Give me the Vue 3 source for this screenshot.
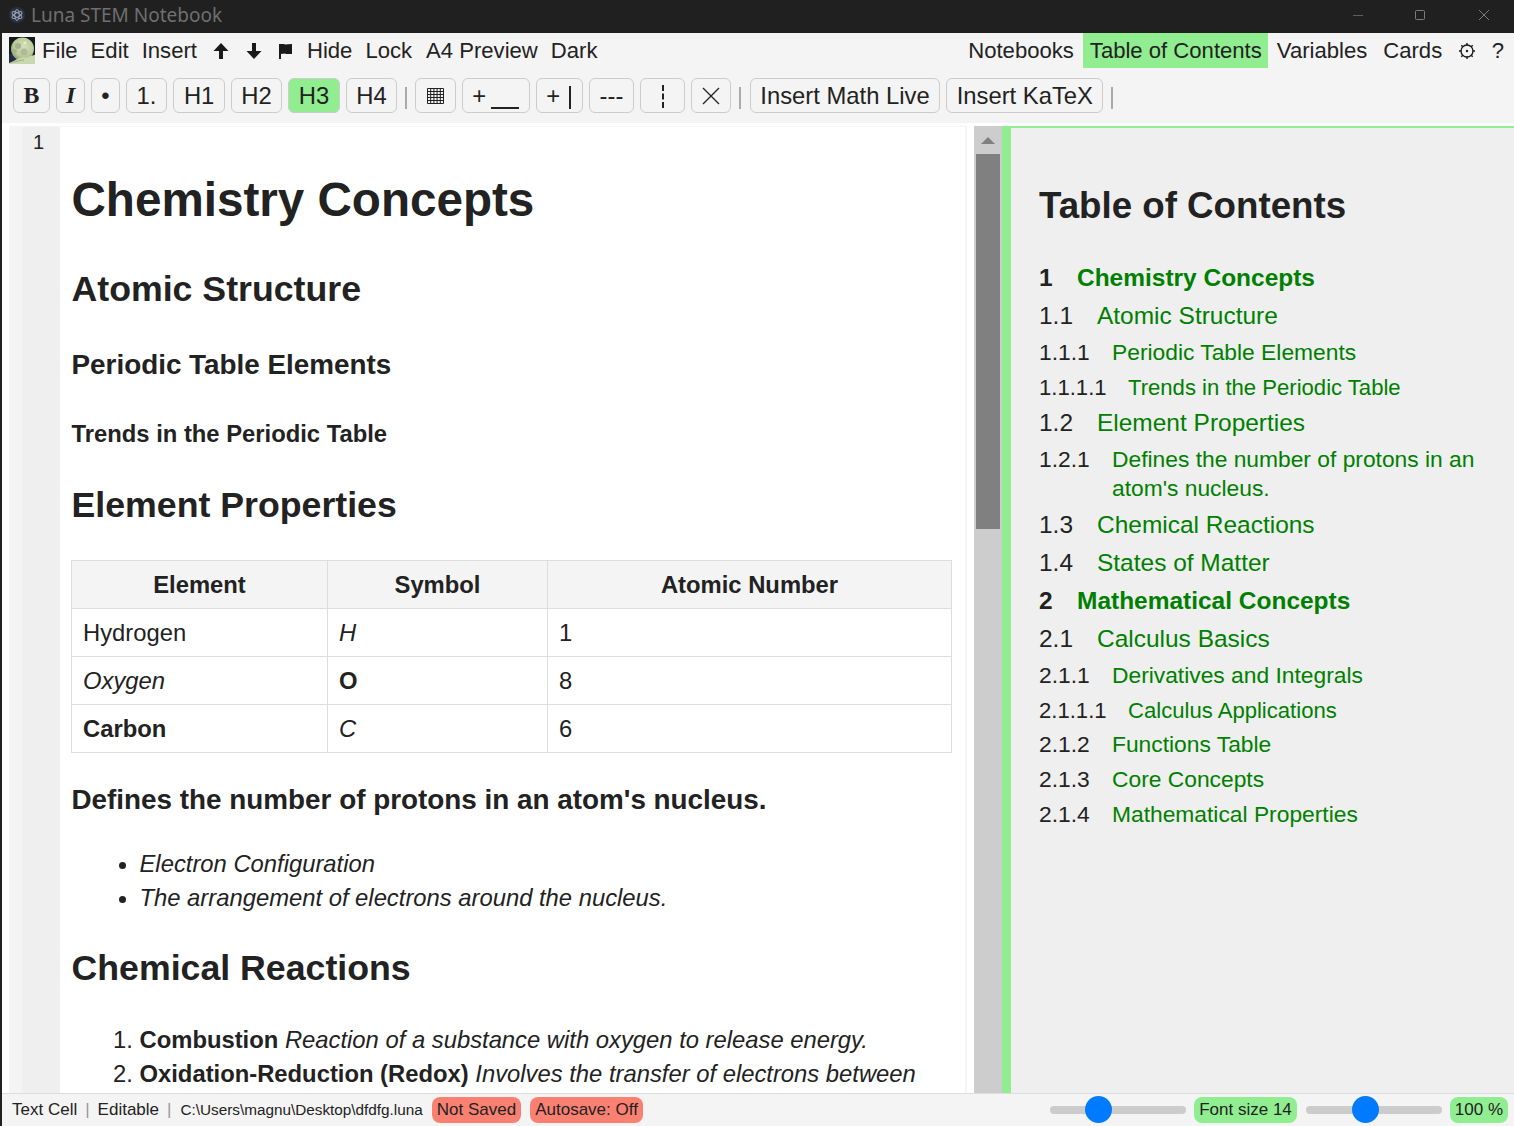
<script setup>
const toc = [
  { l: 1, n: '1', t: 'Chemistry Concepts' },
  { l: 2, n: '1.1', t: 'Atomic Structure' },
  { l: 3, n: '1.1.1', t: 'Periodic Table Elements' },
  { l: 4, n: '1.1.1.1', t: 'Trends in the Periodic Table' },
  { l: 2, n: '1.2', t: 'Element Properties' },
  { l: 3, n: '1.2.1', t: "Defines the number of protons in an atom's nucleus." },
  { l: 2, n: '1.3', t: 'Chemical Reactions' },
  { l: 2, n: '1.4', t: 'States of Matter' },
  { l: 1, n: '2', t: 'Mathematical Concepts' },
  { l: 2, n: '2.1', t: 'Calculus Basics' },
  { l: 3, n: '2.1.1', t: 'Derivatives and Integrals' },
  { l: 4, n: '2.1.1.1', t: 'Calculus Applications' },
  { l: 3, n: '2.1.2', t: 'Functions Table' },
  { l: 3, n: '2.1.3', t: 'Core Concepts' },
  { l: 3, n: '2.1.4', t: 'Mathematical Properties' }
]
</script>

<template>
  <div class="app">
    <header class="titlebar">
      <svg class="app-icon" width="16" height="16" viewBox="0 0 16 16">
        <circle cx="8" cy="8" r="8" fill="#2a3140" />
        <g fill="none" stroke="#9aa5b5" stroke-width="1">
          <ellipse cx="8" cy="8" rx="5.500" ry="2.200" transform="rotate(30 8 8)" />
          <ellipse cx="8" cy="8" rx="5.500" ry="2.200" transform="rotate(90 8 8)" />
          <ellipse cx="8" cy="8" rx="5.500" ry="2.200" transform="rotate(150 8 8)" />
        </g>
      </svg>
      <span class="title">Luna STEM Notebook</span>
      <div class="winctl">
        <svg class="w-min" width="10" height="10" viewBox="0 0 10 10"><path d="M0 5.500h10" stroke="#5f5f5f" /></svg>
        <svg class="w-max" width="10" height="10" viewBox="0 0 10 10"><rect x=".5" y=".5" width="9" height="9" rx="1" fill="none" stroke="#7d7d7d" /></svg>
        <svg class="w-cls" width="10" height="10" viewBox="0 0 10 10"><path d="M0 0l10 10M10 0L0 10" stroke="#7d7d7d" /></svg>
      </div>
    </header>

    <div class="shell">
      <nav class="menu">
        <div class="menu-left">
          <svg class="logo" width="26" height="27" viewBox="0 0 26 27">
            <defs>
              <radialGradient id="moon" cx="55%" cy="40%" r="60%">
                <stop offset="0" stop-color="#d4dfb8" />
                <stop offset=".7" stop-color="#bccb9a" />
                <stop offset="1" stop-color="#8f9f78" />
              </radialGradient>
            </defs>
            <rect width="26" height="27" fill="#15191c" />
            <rect y="17" width="26" height="10" fill="#1f2c44" />
            <circle cx="13.500" cy="12" r="11.500" fill="url(#moon)" />
            <circle cx="9" cy="9" r="3" fill="#a3b18d" />
            <circle cx="15" cy="15" r="3.500" fill="#adbb98" />
            <circle cx="6" cy="14" r="2" fill="#a3b18d" />
            <circle cx="16" cy="6" r="1.600" fill="#e4eacd" />
            <path d="M0 26c4-1 7-4 11-5 3-1 6 0 8-1 2-1 5-2 7-2v9H0z" fill="#c9d8ae" />
            <path d="M3 25c4 0 8-2 12-2" stroke="#9fae88" fill="none" />
          </svg>
          <span class="mi">File</span>
          <span class="mi">Edit</span>
          <span class="mi">Insert</span>
          <svg class="mico first" width="16" height="16" viewBox="0 0 16 16"><path d="M8 0l7.500 8H10v8H6V8H.5z" fill="#1a1a1a" /></svg>
          <svg class="mico" width="16" height="16" viewBox="0 0 16 16"><path d="M8 16L.5 8H6V0h4v8h5.500z" fill="#1a1a1a" /></svg>
          <svg class="mico flag" width="13" height="16" viewBox="0 0 13 16"><path d="M0 1h5l1 .5 7-.5v10H7l-1-.5-4 .5v5H0z" fill="#1a1a1a" /></svg>
          <span class="mi">Hide</span>
          <span class="mi lock">Lock</span>
          <span class="mi">A4 Preview</span>
          <span class="mi">Dark</span>
        </div>
        <div class="menu-right">
          <span class="ri">Notebooks</span>
          <span class="ri active">Table of Contents</span>
          <span class="ri">Variables</span>
          <span class="ri">Cards</span>
          <svg class="gear" width="16" height="16" viewBox="0 0 16 16">
            <circle cx="8" cy="8" r="6" fill="none" stroke="#1a1a1a" stroke-width="1.300" />
            <circle cx="8" cy="8" r="1.200" fill="#1a1a1a" />
            <path d="M8 0v2.500M8 13.500V16M0 8h2.500M13.500 8H16M2.300 2.300l1.500 1.500M13.700 2.300l-1.500 1.500M2.300 13.700l1.500-1.500M13.700 13.700l-1.500-1.500" stroke="#1a1a1a" stroke-width="1.400" />
          </svg>
          <span class="ri q">?</span>
        </div>
      </nav>

      <div class="toolbar">
        <button class="tb serif"><b>B</b></button>
        <button class="tb serif ital"><b><i>I</i></b></button>
        <button class="tb bullet">•</button>
        <button class="tb wide">1.</button>
        <button class="tb">H1</button>
        <button class="tb">H2</button>
        <button class="tb on">H3</button>
        <button class="tb">H4</button>
        <span class="sep first"></span>
        <button class="tb grid">
          <svg width="17" height="16" viewBox="0 0 17 16"><path d="M.5.500h16v15H.5zM.5 3.500h16M.5 6.500h16M.5 9.500h16M.5 12.500h16M3.700.5v15M6.900.5v15M10.100.5v15M13.300.5v15" fill="none" stroke="#222" /></svg>
        </button>
        <button class="tb">+<span class="bar"></span></button>
        <button class="tb">+<span class="vbar"></span></button>
        <button class="tb wide">---</button>
        <button class="tb dash">
          <svg width="4" height="23" viewBox="0 0 4 23"><path d="M2 0v6M2 8.500v6M2 17v6" stroke="#222" stroke-width="2" /></svg>
        </button>
        <button class="tb cross">
          <svg width="18" height="18" viewBox="0 0 18 18"><path d="M1 1l16 16M17 1L1 17" stroke="#222" stroke-width="1.300" /></svg>
        </button>
        <span class="sep"></span>
        <button class="tb">Insert Math Live</button>
        <button class="tb">Insert KaTeX</button>
        <span class="sep"></span>
      </div>

      <main class="main">
        <section class="left">
          <div class="cell">
            <div class="gutter">1</div>
            <article class="doc">
              <h1>Chemistry Concepts</h1>
              <h2>Atomic Structure</h2>
              <h3>Periodic Table Elements</h3>
              <h4>Trends in the Periodic Table</h4>
              <h2 class="h2b">Element Properties</h2>
              <table>
                <colgroup><col class="c1" /><col class="c2" /><col /></colgroup>
                <thead>
                  <tr><th>Element</th><th>Symbol</th><th>Atomic Number</th></tr>
                </thead>
                <tbody>
                  <tr><td>Hydrogen</td><td><i>H</i></td><td>1</td></tr>
                  <tr><td><i>Oxygen</i></td><td><b>O</b></td><td>8</td></tr>
                  <tr><td><b>Carbon</b></td><td><i>C</i></td><td>6</td></tr>
                </tbody>
              </table>
              <h3 class="h3b">Defines the number of protons in an atom's nucleus.</h3>
              <ul>
                <li><i>Electron Configuration</i></li>
                <li><i>The arrangement of electrons around the nucleus.</i></li>
              </ul>
              <h2 class="h2c">Chemical Reactions</h2>
              <ol>
                <li><b>Combustion</b> <i>Reaction of a substance with oxygen to release energy.</i></li>
                <li><b>Oxidation-Reduction (Redox)</b> <i>Involves the transfer of electrons between</i></li>
              </ol>
            </article>
          </div>
          <div class="scroll">
            <span class="arrow"></span>
            <span class="thumb"></span>
          </div>
        </section>
        <aside class="tocpane">
          <h2 class="toc-title">Table of Contents</h2>
          <div v-for="r in toc" :key="r.n" class="row" :class="'l' + r.l">
            <span class="num">{{ r.n }}</span>
            <span class="txt">{{ r.t }}</span>
          </div>
        </aside>
      </main>

      <footer class="status">
        <span>Text Cell</span><span class="pipe">|</span>
        <span>Editable</span><span class="pipe">|</span>
        <span class="path">C:\Users\magnu\Desktop\dfdfg.luna</span>
        <span class="pill red">Not Saved</span>
        <span class="pill red">Autosave: Off</span>
        <span class="spacer"></span>
        <span class="slider"><span class="knob"></span></span>
        <span class="pill green">Font size 14</span>
        <span class="slider s2"><span class="knob"></span></span>
        <span class="pill green">100 %</span>
      </footer>
    </div>
  </div>
</template>

<style>
html, body { margin: 0; padding: 0; background: #202020; }
</style>

<style scoped>
.app {
  width: 1514px;
  height: 1126px;
  overflow: hidden;
  display: flex;
  flex-direction: column;
  font-family: "Liberation Sans", Arial, sans-serif;
  color: #222;
  background: #202020;
}
.titlebar {
  height: 33px;
  flex: none;
  display: flex;
  align-items: center;
  padding-left: 9px;
  padding-bottom: 4px;
  box-sizing: border-box;
}
.app-icon { margin-right: 6px; }
.title { font-family: "Noto Sans", sans-serif; font-size: 19px; color: #6f6f6f; }
.winctl { margin-left: auto; display: flex; padding-right: 25px; }
.w-max { margin-left: 52px; }
.w-cls { margin-left: 54px; }
.shell {
  flex: 1;
  min-height: 0;
  margin-left: 2px;
  display: flex;
  flex-direction: column;
  background: #f4f4f4;
}
.menu {
  height: 35px;
  flex: none;
  display: flex;
  justify-content: space-between;
  font-size: 22.100px;
}
.menu-left, .menu-right { display: flex; align-items: center; height: 35px; }
.logo { margin: 0 7px 0 7px; }
.mi { margin-right: 13px; }
.mi.lock { margin-right: 14px; }
.mico { margin-right: 17px; }
.mico.first { margin-left: 3px; }
.mico.flag { margin-right: 15px; }
.menu-right { padding-right: 10px; }
.ri { padding: 0 6.500px; margin-right: 3px; height: 35px; line-height: 35px; }
.ri.active { background: #90ee90; margin-right: 2px; }
.gear { margin: 0 17px 0 7px; }
.ri.q { margin: 0; padding: 0; }
.toolbar {
  height: 55px;
  flex: none;
  display: flex;
  align-items: flex-start;
  gap: 6px;
  padding: 10px 0 0 11px;
  box-sizing: border-box;
}
.tb {
  height: 35px;
  box-sizing: border-box;
  border: 1px solid #ccc;
  border-radius: 6px;
  background: #f4f4f4;
  font: 23.800px "Liberation Sans", Arial, sans-serif;
  color: #222;
  padding: 0 9.520px;
  display: flex;
  align-items: center;
  justify-content: center;
}
.tb.serif { font-family: "Liberation Serif", serif; }
.tb.ital, .tb.bullet { padding: 0 9px; }
.tb.wide { padding: 0 10px; }
.tb.on { background: #90ee90; }
.tb.grid { padding: 0 11px; }
.tb.dash { padding: 0 19px 0 20px; }
.tb.dash svg { margin-top: 2px; }
.tb.cross { padding: 0 10px; }
.bar { width: 28px; height: 2px; background: #222; margin: 24px 0 0 5px; }
.vbar { width: 2px; height: 23px; background: #222; margin: 4px 1px 0 9px; }
.sep { width: 2.500px; height: 22px; background: #aaa; margin: 9px 2.500px 0 1.500px; }
.sep.first { margin-right: 1.500px; }
.main {
  flex: 1;
  min-height: 0;
  display: flex;
  border-top: 3px solid #fff;
}
.left {
  width: 1000px;
  flex: none;
  display: flex;
  padding-left: 7px;
  box-sizing: border-box;
  background: #fff;
}
.cell {
  width: 958px;
  box-sizing: border-box;
  flex: none;
  display: flex;
  overflow: hidden;
  background: #fff;
  border-top: 1px solid #f4f4f4;
  border-right: 2px solid #f4f4f4;
}
.gutter {
  width: 51px;
  flex: none;
  background: linear-gradient(to right, #f4f4f4 13px, #efefef 13px);
  font-size: 20px;
  text-align: center;
  padding: 5px 0 0 8px;
  margin-top: -1px;
  box-sizing: border-box;
}
.doc {
  flex: 1;
  padding: 0 11.500px;
  min-width: 0;
  font-size: 23.800px;
  line-height: 34px;
  color: #222;
}
h1 { font-size: 47.600px; line-height: 56px; margin: 45px 0 0; }
h2 { font-size: 35.700px; line-height: 42px; margin: 40px 0 0; }
h3 { font-size: 27.850px; line-height: 32px; margin: 39px 0 0; }
h4 { font-size: 23.800px; line-height: 28px; margin: 39px 0 0; }
.h2b { margin-top: 36px; }
.h3b { margin-top: 31px; }
.h2c { margin-top: 32px; }
table { width: 881px; border-collapse: collapse; table-layout: fixed; margin: 34px 0 0 -0.500px; }
.c1 { width: 256px; }
.c2 { width: 220px; }
th, td { border: 1px solid #ddd; height: 48px; padding: 0 11px; box-sizing: border-box; text-align: left; }
th { background: #f4f4f4; text-align: center; }
ul, ol { margin: 31px 0 0; padding: 0 0 0 68px; }
ol { margin-top: 34px; }
.scroll {
  width: 28px;
  margin-left: 7px;
  flex: none;
  background: #cdcdcd;
  display: flex;
  flex-direction: column;
  align-items: center;
}
.arrow {
  width: 0;
  height: 0;
  margin-top: 11px;
  border-left: 7px solid transparent;
  border-right: 7px solid transparent;
  border-bottom: 7px solid #808080;
}
.thumb { width: 24px; height: 375px; margin-top: 10px; background: #808080; }
.tocpane {
  flex: 1;
  min-width: 0;
  border-left: 9px solid #90ee90;
  border-top: 2px solid #90ee90;
  background: #efefef;
  padding: 0 28px;
  box-sizing: border-box;
  color: #222;
}
.toc-title { font-size: 36.700px; line-height: 42px; margin: 57px 0 30.500px; }
.row { display: flex; }
.num { flex: none; }
.txt { color: #008000; }
.l1, .l2 { font-size: 24.480px; line-height: 29px; padding: 5px 0 4px; }
.l3 { font-size: 22.800px; line-height: 29px; padding: 4.500px 0 1.500px; }
.l4 { font-size: 22.100px; line-height: 26px; padding: 6px 0 2px; }
.l1 { font-weight: bold; }
.l1 .num { width: 38px; }
.l2 .num { width: 58px; }
.l3 .num { width: 73px; }
.l4 .num { width: 89px; }
.status {
  height: 32px;
  flex: none;
  margin-bottom: 1px;
  display: flex;
  align-items: center;
  font-size: 17px;
  padding: 0 6px 0 10px;
  background: #f4f4f4;
  border-top: 1px solid #ddd;
  box-sizing: border-box;
}
.pipe { margin: 0 8px; color: #999; }
.path { font-size: 15.300px; margin: 0 9px 0 1px; }
.pill { padding: 2px 5px; border-radius: 8px; margin-right: 9px; line-height: 22px; }
.red { background: #fa8072; }
.green { background: #90ee90; margin-right: 0; }
.spacer { flex: 1; }
.slider { width: 136px; height: 8px; border-radius: 4px; background: #ccc; position: relative; margin-right: 8px; }
.s2 { margin-left: 9px; }
.knob { position: absolute; left: 35px; top: -9.500px; width: 27px; height: 27px; border-radius: 50%; background: #007bff; }
.s2 .knob { left: 46px; }
</style>
